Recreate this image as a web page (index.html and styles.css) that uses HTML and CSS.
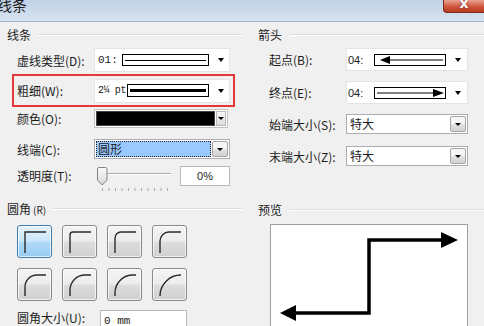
FILE: index.html
```html
<!DOCTYPE html>
<html lang="zh-CN">

<head>
  <meta charset="UTF-8">
  <meta name="viewport" content="width=device-width, initial-scale=1.0">
  <title>线条</title>
  <link rel="stylesheet" href="styles.css">
</head>

<body>
  <div class="dialog">
    <div class="titlebar">
      <span class="title">线条</span>
      <span class="close">x</span>
    </div>

    <div class="panes">
      <!-- left side: line settings + corners -->
      <div class="pane left">
        <div class="group-head">线条</div>

        <div class="row r-dash">
          <span class="label">虚线类型(D):</span>
          <div class="linecombo">
            <span class="code">01:</span>
            <span class="sample"><i class="stroke"></i></span>
            <span class="arrow"></span>
          </div>
        </div>

        <div class="redbox">
          <span class="label">粗细(W):</span>
          <div class="linecombo weight">
            <span class="code">2¼ pt</span>
            <span class="sample"><i class="stroke"></i></span>
            <span class="arrow"></span>
          </div>
        </div>

        <div class="row r-color">
          <span class="label">颜色(O):</span>
          <div class="colorcombo">
            <span class="swatch"></span>
            <span class="minidrop"></span>
          </div>
        </div>

        <div class="row r-cap">
          <span class="label">线端(C):</span>
          <div class="select">
            <span class="value sel">圆形</span>
            <span class="dropbtn"></span>
          </div>
        </div>

        <div class="row r-alpha">
          <span class="label">透明度(T):</span>
          <svg class="slider" width="76" height="26" viewBox="0 0 76 26">
            <line x1="10" y1="7.5" x2="74" y2="7.5" stroke="#a9a9a9" />
            <line x1="10" y1="8.5" x2="74" y2="8.5" stroke="#ffffff" />
            <g stroke="#a8a8a8">
              <line x1="5.5" y1="22" x2="5.5" y2="25" />
              <line x1="12" y1="22" x2="12" y2="25" />
              <line x1="18.5" y1="22" x2="18.5" y2="25" />
              <line x1="25" y1="22" x2="25" y2="25" />
              <line x1="31.5" y1="22" x2="31.5" y2="25" />
              <line x1="38" y1="22" x2="38" y2="25" />
              <line x1="44.5" y1="22" x2="44.5" y2="25" />
              <line x1="51" y1="22" x2="51" y2="25" />
              <line x1="57.5" y1="22" x2="57.5" y2="25" />
              <line x1="64" y1="22" x2="64" y2="25" />
              <line x1="70.5" y1="22" x2="70.5" y2="25" />
            </g>
            <defs>
              <linearGradient id="thumb" x1="0" y1="0" x2="0" y2="1">
                <stop offset="0" stop-color="#fbfbfb" />
                <stop offset="1" stop-color="#d6d6d6" />
              </linearGradient>
            </defs>
            <path d="M0.5 3 Q0.5 1.5 2 1.5 H8.5 Q10 1.5 10 3 V14 L5.25 19 L0.5 14 Z" fill="url(#thumb)" stroke="#858585" />
          </svg>
          <span class="pct">0%</span>
        </div>

        <div class="group-head g-corner"><span>圆角<small>(R)</small></span></div>

        <div class="corners">
          <span class="corner on"><svg width="33" height="31"><path d="M7 27 V6 H28" /></svg></span>
          <span class="corner"><svg width="33" height="31"><path d="M7 27 V9 A3 3 0 0 1 10 6 H28" /></svg></span>
          <span class="corner"><svg width="33" height="31"><path d="M7 27 V12 A6 6 0 0 1 13 6 H28" /></svg></span>
          <span class="corner"><svg width="33" height="31"><path d="M7 27 V15 A9 9 0 0 1 16 6 H28" /></svg></span>
          <span class="corner"><svg width="33" height="31"><path d="M7 27 V18 A12 12 0 0 1 19 6 H28" /></svg></span>
          <span class="corner"><svg width="33" height="31"><path d="M7 27 V21 A15 15 0 0 1 22 6 H28" /></svg></span>
          <span class="corner"><svg width="33" height="31"><path d="M7 27 V24 A18 18 0 0 1 25 6 H28" /></svg></span>
          <span class="corner"><svg width="33" height="31"><path d="M7 27 A21 21 0 0 1 28 6" /></svg></span>
        </div>

        <div class="row r-radius">
          <span class="label">圆角大小(U):</span>
          <span class="mm">0 mm</span>
        </div>
      </div>

      <!-- right side: arrows + preview -->
      <div class="pane right">
        <div class="group-head">箭头</div>

        <div class="row r-start">
          <span class="label">起点(B):</span>
          <div class="linecombo arrows">
            <span class="code">04:</span>
            <span class="sample">
              <svg width="70" height="10">
                <polygon points="5,5 15,1 15,9" fill="#000" />
                <line x1="15" y1="5" x2="68" y2="5" stroke="#000" />
              </svg>
            </span>
            <span class="arrow"></span>
          </div>
        </div>

        <div class="row r-end">
          <span class="label">终点(E):</span>
          <div class="linecombo arrows">
            <span class="code">04:</span>
            <span class="sample">
              <svg width="70" height="10">
                <line x1="2" y1="5" x2="58" y2="5" stroke="#000" />
                <polygon points="69,5 58,1 58,9" fill="#000" />
              </svg>
            </span>
            <span class="arrow"></span>
          </div>
        </div>

        <div class="row r-bsize">
          <span class="label">始端大小(S):</span>
          <div class="select">
            <span class="value">特大</span>
            <span class="dropbtn"></span>
          </div>
        </div>

        <div class="row r-esize">
          <span class="label">末端大小(Z):</span>
          <div class="select">
            <span class="value">特大</span>
            <span class="dropbtn"></span>
          </div>
        </div>

        <div class="group-head g-preview">预览</div>

        <div class="preview">
          <svg width="196" height="108" viewBox="0 0 196 108">
            <path d="M22 88 H98 V15 H174" fill="none" stroke="#000" stroke-width="3.5" stroke-linejoin="miter" />
            <polygon points="187,15 170,7 170,23" fill="#000" />
            <polygon points="9,88 25,80 25,96" fill="#000" />
          </svg>
        </div>
      </div>
    </div>
  </div>
</body>

</html>
```

FILE: styles.css
```css
* {
  box-sizing: border-box;
}

body {
  margin: 0;
  background: #f0f0f0;
  font-family: "Noto Sans CJK SC", "Noto Sans", sans-serif;
  font-size: 12px;
  color: #1c1c1c;
  overflow: hidden;
}

.dialog {
  width: 484px;
  height: 326px;
  overflow: hidden;
}

/* window title */
.titlebar {
  height: 22px;
  border-bottom: 1px solid #a3b3c6;
  background: linear-gradient(#c0d1e5, #d7e3f0);
  display: flex;
  justify-content: space-between;
  align-items: flex-start;
  overflow: hidden;
}

.title {
  font-size: 15px;
  line-height: 15px;
  margin: -3px 0 0 -3px;
}

.close {
  width: 41px;
  height: 13px;
  border: 1px solid #7b2c1f;
  border-top: none;
  border-right: none;
  border-radius: 0 0 0 4px;
  background: linear-gradient(#e8a493, #d0553c 55%, #b93b24);
  color: #fff;
  font: bold 14px/6px "DejaVu Sans", sans-serif;
  text-align: center;
  text-shadow: 0 0 2px #5a1a10;
}

.panes {
  display: grid;
  grid-template-columns: 242px 242px;
}

.pane.left {
  padding: 6px 0 0 7px;
}

.pane.right {
  padding: 6px 0 0 16px;
}

/* group box headers */
.group-head {
  display: flex;
  align-items: center;
  gap: 7px;
  height: 14px;
  line-height: 14px;
}

.group-head small {
  font-size: 10px;
  margin-left: 2px;
}

.group-head::after {
  content: "";
  flex: 1;
  border-top: 1px solid #d5dfe5;
  border-bottom: 1px solid #fff;
}

.right .group-head {
  gap: 8px;
}

.g-corner {
  margin-top: 10px;
}

.g-preview {
  margin-top: 37px;
}

/* label + control rows */
.row {
  display: flex;
  align-items: center;
  padding-left: 10px;
}

.right .row {
  padding-left: 11px;
}

.label {
  width: 77px;
  flex: none;
  white-space: nowrap;
}

.r-dash {
  margin-top: 6px;
  height: 24px;
}

.redbox {
  margin: 2px 0 0 5px;
  width: 223px;
  height: 33px;
  border: 2px solid #e5383b;
  padding-left: 3px;
  display: flex;
  align-items: center;
}

.redbox .linecombo {
  height: 24px;
}

.r-color {
  margin-top: 2px;
  height: 19px;
}

.r-cap {
  margin-top: 11px;
  height: 20px;
}

.r-alpha {
  margin-top: 7px;
  height: 26px;
  align-items: flex-start;
}

.r-alpha .label {
  line-height: 20px;
}

.r-radius {
  margin-top: 9px;
  height: 22px;
  align-items: flex-start;
}

.r-radius .label {
  width: 83px;
  line-height: 15px;
}

.r-start {
  margin-top: 6px;
  height: 23px;
}

.r-end {
  margin-top: 10px;
  height: 23px;
}

.r-bsize {
  margin-top: 10px;
  height: 20px;
}

.r-esize {
  margin-top: 12px;
  height: 20px;
}

/* owner-drawn line combos */
.linecombo {
  display: flex;
  align-items: center;
  width: 136px;
  height: 100%;
  background: #fff;
  border: 1px solid #e4e4e4;
  padding-left: 3px;
}

.code {
  flex: none;
  width: 24px;
  font: 11px "Liberation Mono", monospace;
  white-space: nowrap;
}

.sample {
  flex: none;
  display: flex;
  align-items: center;
  width: 87px;
  height: 12px;
  border: 1px solid #000;
  padding: 0 2px;
}

.stroke {
  flex: 1;
  height: 1px;
  background: #000;
}

.weight .code {
  width: 29px;
  font-size: 10px;
  letter-spacing: -0.4px;
}

.weight .sample {
  width: 82px;
  height: 13px;
}

.weight .stroke {
  height: 3px;
}

.arrows {
  width: 122px;
  padding-left: 1px;
}

.arrows .code {
  width: 26px;
  font: 11px "Liberation Sans", sans-serif;
}

.arrows .sample {
  width: 72px;
  padding: 0;
}

.arrows .sample svg {
  display: block;
}

.arrow {
  flex: 1;
  display: flex;
  justify-content: center;
  padding-left: 3px;
}

.arrow::before {
  content: "";
  border-left: 3.5px solid transparent;
  border-right: 3.5px solid transparent;
  border-top: 4px solid #000;
}

/* colour picker combo */
.colorcombo {
  display: flex;
  gap: 1px;
  width: 134px;
  height: 100%;
  background: #fff;
  border: 1px solid #c2c2c2;
  padding: 1px;
}

.swatch {
  flex: 1;
  background: #000;
  border: 1px solid #444;
}

.minidrop {
  width: 10px;
  display: flex;
  align-items: center;
  justify-content: center;
  background: linear-gradient(#f7f7f7, #dcdcdc);
  border: 1px solid #b8b8b8;
}

.minidrop::before,
.dropbtn::before {
  content: "";
  border-left: 3px solid transparent;
  border-right: 3px solid transparent;
  border-top: 3px solid #000;
}

/* standard dropdown */
.select {
  display: flex;
  gap: 1px;
  width: 136px;
  height: 100%;
  background: #fff;
  border: 1px solid #abadb3;
  padding: 1px;
}

.right .select {
  width: 122px;
}

.value {
  flex: 1;
  padding-left: 2px;
  line-height: 16px;
}

.value.sel {
  background: #99c9ff;
  outline: 1px dotted #222;
  outline-offset: -1px;
}

.dropbtn {
  width: 16px;
  display: flex;
  align-items: center;
  justify-content: center;
  border: 1px solid #a5a5a5;
  border-radius: 2px;
  background: linear-gradient(#f6f6f6 45%, #e0e0e0 55%, #d2d2d2);
}

/* transparency */
.slider {
  display: block;
  margin-left: 3px;
}

.pct {
  margin-left: 7px;
  width: 50px;
  height: 20px;
  background: #fff;
  border: 1px solid #b7b9bf;
  text-align: center;
  font: 11px/18px "Liberation Sans", sans-serif;
}

/* corner buttons */
.corners {
  display: grid;
  grid-template-columns: repeat(4, 35px);
  gap: 10px;
  margin: 9px 0 0 10px;
}

.corner {
  width: 35px;
  height: 33px;
  border: 1px solid #8a8a8a;
  border-radius: 3px;
  background: linear-gradient(#f4f4f4, #ececec 48%, #dddddd 52%, #d0d0d0);
  box-shadow: inset 0 0 0 1px rgba(255, 255, 255, 0.7);
}

.corner.on {
  border-color: #3c7fb1;
  background: linear-gradient(#e4f2fc, #cce7fa 48%, #b0daf7 52%, #95cbf1);
}

.corner svg {
  display: block;
}

.corner path {
  fill: none;
  stroke: #2a2a2a;
  stroke-width: 1.4;
}

.mm {
  width: 87px;
  height: 22px;
  background: #fff;
  border: 1px solid #b7b9bf;
  padding-left: 3px;
  font: 11px/20px "Liberation Mono", monospace;
}

/* preview */
.preview {
  margin: 7px 0 0 12px;
  width: 198px;
  height: 110px;
  background: #fff;
  border: 1px solid #a0a0a0;
}

.preview svg {
  display: block;
}
```
